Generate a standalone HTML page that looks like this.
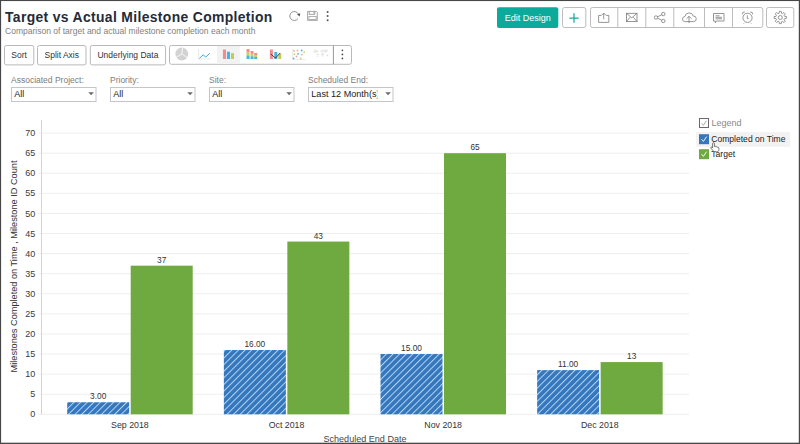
<!DOCTYPE html>
<html><head><meta charset="utf-8"><style>
html,body{margin:0;padding:0;background:#fff;width:800px;height:444px;overflow:hidden}
svg{display:block;font-family:"Liberation Sans", sans-serif}
</style></head><body>
<svg width="800" height="444" viewBox="0 0 800 444">
<defs>
<pattern id="hatch" patternUnits="userSpaceOnUse" width="4.67" height="4.67" patternTransform="rotate(45)">
<rect width="4.67" height="4.67" fill="#3577bd"/>
<rect x="0" y="0" width="1" height="4.67" fill="#b3d3f3"/>
</pattern>
</defs>
<rect width="800" height="444" fill="#fff"/>
<text x="5" y="22.2" font-size="13.9" letter-spacing="0.35" font-weight="bold" fill="#252b38">Target vs Actual Milestone Completion</text>
<text x="5" y="33.6" font-size="8.53" fill="#818181">Comparison of target and actual milestone completion each month</text>
<path d="M298.0,18.6 A4.5,4.5 0 1 1 298.3,13.9" fill="none" stroke="#777" stroke-width="0.8"/>
<path d="M297.0,14.3 L300.3,13.2 L299.6,16.6 Z" fill="#555"/>
<path d="M307.6,11.4 H316.3 L317.3,12.4 V20.4 H307.6 Z" fill="none" stroke="#8a8a8a" stroke-width="0.75"/>
<path d="M309.2,11.4 V14.4 H314.8 V11.4 M313.8,12.2 V13.6" fill="none" stroke="#8a8a8a" stroke-width="0.75"/>
<rect x="308.9" y="16.4" width="7.2" height="3.2" fill="none" stroke="#999" stroke-width="0.75"/>
<circle cx="327.6" cy="12" r="1.0" fill="#555"/>
<circle cx="327.6" cy="16.1" r="1.0" fill="#555"/>
<circle cx="327.6" cy="20.2" r="1.0" fill="#555"/>
<rect x="497" y="7.2" width="61.3" height="20.8" rx="2" fill="#0caa9b"/>
<text x="527.8" y="20.8" font-size="9" fill="#fff" text-anchor="middle">Edit Design</text>
<rect x="562.5" y="7.5" width="23.3" height="20" rx="2" fill="#fff" stroke="#bdbdbd" stroke-width="1"/>
<path d="M569.3,18 H578.7 M574,13.3 V22.7" stroke="#17ab9e" stroke-width="1.25"/>
<rect x="590.5" y="7.5" width="172.3" height="20" rx="2" fill="#fff" stroke="#bdbdbd" stroke-width="1"/>
<line x1="617.8" y1="7.5" x2="617.8" y2="27.5" stroke="#bdbdbd" stroke-width="1"/>
<line x1="645.8" y1="7.5" x2="645.8" y2="27.5" stroke="#bdbdbd" stroke-width="1"/>
<line x1="673.8" y1="7.5" x2="673.8" y2="27.5" stroke="#bdbdbd" stroke-width="1"/>
<line x1="704.5" y1="7.5" x2="704.5" y2="27.5" stroke="#bdbdbd" stroke-width="1"/>
<line x1="732.5" y1="7.5" x2="732.5" y2="27.5" stroke="#bdbdbd" stroke-width="1"/>
<rect x="766.5" y="7.5" width="27.3" height="20" rx="2" fill="#fff" stroke="#bdbdbd" stroke-width="1"/>
<path d="M601.2,15.4 H598.6 V22.4 H608.8 V15.4 H606.3" fill="none" stroke="#7c7c7c" stroke-width="0.8"/>
<path d="M603.7,19.2 V13.1 M601.3,15.5 L603.7,13.1 L606.1,15.5" fill="none" stroke="#7c7c7c" stroke-width="0.8"/>
<rect x="626.5" y="13.3" width="10.5" height="8.3" fill="none" stroke="#7c7c7c" stroke-width="0.8"/>
<path d="M626.5,13.3 L631.75,17.8 L637,13.3 M626.5,21.6 L630.2,17.2 M637,21.6 L633.3,17.2" fill="none" stroke="#7c7c7c" stroke-width="0.8"/>
<path d="M656,17.5 L663.3,14 M656,17.5 L663.3,21" stroke="#7c7c7c" stroke-width="0.8"/>
<circle cx="656" cy="17.5" r="1.7" fill="#fff" stroke="#7c7c7c" stroke-width="0.8"/>
<circle cx="663.3" cy="14" r="1.7" fill="#fff" stroke="#7c7c7c" stroke-width="0.8"/>
<circle cx="663.3" cy="21" r="1.7" fill="#fff" stroke="#7c7c7c" stroke-width="0.8"/>
<path d="M684.4,21.6 A2.6,2.6 0 0 1 684.9,16.5 A4.3,4.3 0 0 1 693.3,16.1 A2.75,2.75 0 0 1 693.7,21.6 Z" fill="none" stroke="#7c7c7c" stroke-width="0.8"/>
<path d="M689,23 V16.3 M686.6,18.7 L689,16.3 L691.4,18.7" fill="none" stroke="#7c7c7c" stroke-width="0.8"/>
<path d="M713.5,13.5 H724 V21 H716.5 L715.3,22.8 V21 H713.5 Z" fill="none" stroke="#7c7c7c" stroke-width="0.8"/>
<path d="M715.5,15.8 H719.5 M715.5,17.3 H722 M715.5,18.8 H722" stroke="#7c7c7c" stroke-width="0.8"/>
<circle cx="747.5" cy="17.8" r="4.6" fill="none" stroke="#7c7c7c" stroke-width="0.8"/>
<path d="M742.3,14.3 A2.2,2.2 0 0 1 744.8,12 M752.7,14.3 A2.2,2.2 0 0 0 750.2,12 M747.3,15.3 V18.6 H748.6 M744.5,22.8 L743.8,23.5 M750.5,22.8 L751.2,23.5" fill="none" stroke="#7c7c7c" stroke-width="0.8"/>
<path d="M779.16,13.25 L779.33,11.38 L781.27,11.38 L781.44,13.25 L782.50,13.69 L783.94,12.48 L785.32,13.86 L784.11,15.30 L784.55,16.36 L786.42,16.53 L786.42,18.47 L784.55,18.64 L784.11,19.70 L785.32,21.14 L783.94,22.52 L782.50,21.31 L781.44,21.75 L781.27,23.62 L779.33,23.62 L779.16,21.75 L778.10,21.31 L776.66,22.52 L775.28,21.14 L776.49,19.70 L776.05,18.64 L774.18,18.47 L774.18,16.53 L776.05,16.36 L776.49,15.30 L775.28,13.86 L776.66,12.48 L778.10,13.69 Z" fill="none" stroke="#7c7c7c" stroke-width="0.8" stroke-linejoin="round"/>
<circle cx="780.3" cy="17.5" r="2.0" fill="none" stroke="#7c7c7c" stroke-width="0.8"/>
<rect x="4.5" y="45.5" width="29.299999999999997" height="19.4" rx="2" fill="#fff" stroke="#b9b9b9" stroke-width="1"/>
<text x="19.15" y="57.6" font-size="8.5" fill="#333" text-anchor="middle">Sort</text>
<rect x="37.5" y="45.5" width="48.5" height="19.4" rx="2" fill="#fff" stroke="#b9b9b9" stroke-width="1"/>
<text x="61.75" y="57.6" font-size="8.5" fill="#333" text-anchor="middle">Split Axis</text>
<rect x="90.3" y="45.5" width="75.3" height="19.4" rx="2" fill="#fff" stroke="#b9b9b9" stroke-width="1"/>
<text x="127.94999999999999" y="57.6" font-size="8.5" fill="#333" text-anchor="middle">Underlying Data</text>
<rect x="169.5" y="45.5" width="182" height="18.8" rx="2" fill="#fff" stroke="#b9b9b9" stroke-width="1"/>
<rect x="217" y="46" width="22.8" height="17.8" fill="#f2f2f2"/>
<line x1="333.4" y1="45.5" x2="333.4" y2="64.3" stroke="#999" stroke-width="1"/>
<circle cx="342.4" cy="50.3" r="0.85" fill="#444"/>
<circle cx="342.4" cy="54.4" r="0.85" fill="#444"/>
<circle cx="342.4" cy="58.4" r="0.85" fill="#444"/>
<circle cx="181.8" cy="54" r="6.4" fill="#d2d2d2"/>
<path d="M181.8,54 L182.6,47.6 M181.8,54 L176.1,57.2 M181.8,54 L187.4,57.6" stroke="#fff" stroke-width="0.8"/>
<path d="M198.7,49 V59 H211" fill="none" stroke="#d8d8d8" stroke-width="0.6"/>
<path d="M199.4,58.4 L203.3,54.7 L205.7,57.2 L209.8,53.2" fill="none" stroke="#3fa9dd" stroke-width="1.0"/>
<rect x="222.9" y="49.5" width="3.1" height="9.5" fill="#f48c8c"/>
<rect x="226.9" y="51.7" width="3.1" height="7.3" fill="#44b4e4"/>
<rect x="230.9" y="53.1" width="3.1" height="5.9" fill="#bfcc55"/>
<rect x="246.5" y="49" width="3" height="3.5333333333333337" fill="#f48c8c"/>
<rect x="246.5" y="52.333333333333336" width="3" height="3.5333333333333337" fill="#c8d060"/>
<rect x="246.5" y="55.666666666666664" width="3" height="3.3333333333333335" fill="#44b4e4"/>
<rect x="250.5" y="51" width="3" height="2.8666666666666667" fill="#f48c8c"/>
<rect x="250.5" y="53.666666666666664" width="3" height="2.8666666666666667" fill="#c8d060"/>
<rect x="250.5" y="56.333333333333336" width="3" height="2.6666666666666665" fill="#44b4e4"/>
<rect x="254.2" y="53" width="3" height="2.2" fill="#f48c8c"/>
<rect x="254.2" y="55.0" width="3" height="2.2" fill="#c8d060"/>
<rect x="254.2" y="57.0" width="3" height="2.0" fill="#44b4e4"/>
<rect x="269.9" y="49.5" width="3" height="9.5" fill="#f48c8c"/>
<rect x="274.3" y="52" width="3" height="7" fill="#44b4e4"/>
<rect x="278.3" y="53.5" width="3" height="5.5" fill="#bfcc55"/>
<path d="M270.7,54 L275.5,58 L280.2,53" fill="none" stroke="#334" stroke-width="0.9"/>
<path d="M292.3,49 V59.6 H305.5" fill="none" stroke="#dcdcdc" stroke-width="0.6"/>
<circle cx="294" cy="50.8" r="0.9" fill="#f4a0a0"/>
<circle cx="297.5" cy="50.5" r="0.9" fill="#c8d070"/>
<circle cx="301.7" cy="50.5" r="0.9" fill="#44b4e4"/>
<circle cx="304.2" cy="52.2" r="0.9" fill="#c8d070"/>
<circle cx="294.5" cy="54.2" r="0.9" fill="#c8d070"/>
<circle cx="298" cy="53.8" r="0.9" fill="#44b4e4"/>
<circle cx="301.8" cy="54.6" r="0.9" fill="#f4a0a0"/>
<circle cx="296.5" cy="56.5" r="0.9" fill="#f4a0a0"/>
<circle cx="293.6" cy="58.4" r="0.9" fill="#44b4e4"/>
<circle cx="300.6" cy="58.4" r="0.9" fill="#c8d070"/>
<g fill="#dedede"><circle cx="316.14" cy="52.68" r="0.45"/><circle cx="314.62" cy="52.41" r="0.45"/><circle cx="315.53" cy="51.21" r="0.45"/><circle cx="318.37" cy="51.62" r="0.45"/><circle cx="315.93" cy="52.27" r="0.45"/><circle cx="317.78" cy="51.47" r="0.45"/><circle cx="316.93" cy="50.55" r="0.45"/><circle cx="315.35" cy="51.02" r="0.45"/><circle cx="314.40" cy="50.38" r="0.45"/><circle cx="313.79" cy="51.30" r="0.45"/><circle cx="315.69" cy="51.14" r="0.45"/><circle cx="316.10" cy="50.27" r="0.45"/><circle cx="315.86" cy="51.77" r="0.45"/><circle cx="317.19" cy="50.68" r="0.45"/><circle cx="315.53" cy="50.03" r="0.45"/><circle cx="315.44" cy="50.00" r="0.45"/><circle cx="314.16" cy="52.38" r="0.45"/><circle cx="313.64" cy="52.03" r="0.45"/><circle cx="316.59" cy="51.16" r="0.45"/><circle cx="316.80" cy="52.06" r="0.45"/><circle cx="317.68" cy="51.27" r="0.45"/><circle cx="315.00" cy="50.87" r="0.45"/><circle cx="314.39" cy="51.45" r="0.45"/><circle cx="317.05" cy="56.61" r="0.45"/><circle cx="316.68" cy="54.64" r="0.45"/><circle cx="317.10" cy="53.92" r="0.45"/><circle cx="318.12" cy="54.09" r="0.45"/><circle cx="317.31" cy="54.86" r="0.45"/><circle cx="318.13" cy="54.14" r="0.45"/><circle cx="318.12" cy="54.73" r="0.45"/><circle cx="317.40" cy="54.69" r="0.45"/><circle cx="317.87" cy="54.31" r="0.45"/><circle cx="317.45" cy="55.94" r="0.45"/><circle cx="318.10" cy="54.08" r="0.45"/><circle cx="318.26" cy="56.35" r="0.45"/><circle cx="321.51" cy="51.25" r="0.45"/><circle cx="321.64" cy="52.01" r="0.45"/><circle cx="322.22" cy="50.82" r="0.45"/><circle cx="321.76" cy="50.83" r="0.45"/><circle cx="321.83" cy="50.32" r="0.45"/><circle cx="323.09" cy="50.19" r="0.45"/><circle cx="320.50" cy="50.96" r="0.45"/><circle cx="321.85" cy="51.31" r="0.45"/><circle cx="321.78" cy="50.88" r="0.45"/><circle cx="322.31" cy="51.72" r="0.45"/><circle cx="321.54" cy="50.70" r="0.45"/><circle cx="323.35" cy="51.29" r="0.45"/><circle cx="322.34" cy="56.30" r="0.45"/><circle cx="323.39" cy="53.76" r="0.45"/><circle cx="321.96" cy="54.86" r="0.45"/><circle cx="322.23" cy="53.29" r="0.45"/><circle cx="321.92" cy="53.93" r="0.45"/><circle cx="323.60" cy="53.98" r="0.45"/><circle cx="321.88" cy="55.21" r="0.45"/><circle cx="322.85" cy="55.59" r="0.45"/><circle cx="323.66" cy="54.30" r="0.45"/><circle cx="322.68" cy="54.44" r="0.45"/><circle cx="322.01" cy="55.27" r="0.45"/><circle cx="323.73" cy="54.70" r="0.45"/><circle cx="322.60" cy="54.14" r="0.45"/><circle cx="322.23" cy="53.52" r="0.45"/><circle cx="322.49" cy="53.43" r="0.45"/><circle cx="325.31" cy="49.84" r="0.45"/><circle cx="326.73" cy="51.05" r="0.45"/><circle cx="324.68" cy="49.77" r="0.45"/><circle cx="325.99" cy="51.95" r="0.45"/><circle cx="324.58" cy="50.56" r="0.45"/><circle cx="324.90" cy="51.59" r="0.45"/><circle cx="324.42" cy="51.79" r="0.45"/><circle cx="325.43" cy="51.82" r="0.45"/><circle cx="326.07" cy="50.77" r="0.45"/><circle cx="323.67" cy="50.49" r="0.45"/><circle cx="325.48" cy="51.61" r="0.45"/><circle cx="326.49" cy="50.35" r="0.45"/><circle cx="326.76" cy="51.85" r="0.45"/><circle cx="325.69" cy="50.58" r="0.45"/><circle cx="325.24" cy="51.73" r="0.45"/><circle cx="327.00" cy="50.20" r="0.45"/><circle cx="326.76" cy="50.55" r="0.45"/><circle cx="324.75" cy="51.97" r="0.45"/><circle cx="327.51" cy="50.38" r="0.45"/><circle cx="326.16" cy="51.48" r="0.45"/><circle cx="324.71" cy="50.89" r="0.45"/><circle cx="326.96" cy="49.80" r="0.45"/><circle cx="326.64" cy="51.68" r="0.45"/><circle cx="327.81" cy="54.82" r="0.45"/><circle cx="327.72" cy="55.00" r="0.45"/><circle cx="327.91" cy="55.85" r="0.45"/><circle cx="327.66" cy="55.05" r="0.45"/><circle cx="327.10" cy="55.98" r="0.45"/><circle cx="326.88" cy="55.78" r="0.45"/><circle cx="327.88" cy="55.33" r="0.45"/></g>
<text x="11" y="82.9" font-size="8.5" fill="#7d7d7d">Associated Project:</text>
<rect x="11.5" y="87.5" width="84.5" height="14" fill="#fff" stroke="#c4c4cc" stroke-width="1"/>
<text x="14.3" y="97.2" font-size="9" fill="#222">All</text>
<path d="M88.3,92.3 H93.89999999999999 L91.1,95.2 Z" fill="#6a6a6a"/>
<text x="110" y="82.9" font-size="8.5" fill="#7d7d7d">Priority:</text>
<rect x="110.5" y="87.5" width="84.5" height="14" fill="#fff" stroke="#c4c4cc" stroke-width="1"/>
<text x="113.3" y="97.2" font-size="9" fill="#222">All</text>
<path d="M187.3,92.3 H192.9 L190.10000000000002,95.2 Z" fill="#6a6a6a"/>
<text x="209" y="82.9" font-size="8.5" fill="#7d7d7d">Site:</text>
<rect x="209.5" y="87.5" width="84.5" height="14" fill="#fff" stroke="#c4c4cc" stroke-width="1"/>
<text x="212.3" y="97.2" font-size="9" fill="#222">All</text>
<path d="M286.3,92.3 H291.90000000000003 L289.1,95.2 Z" fill="#6a6a6a"/>
<text x="308" y="82.9" font-size="8.5" fill="#7d7d7d">Scheduled End:</text>
<rect x="308.5" y="87.5" width="84.5" height="14" fill="#fff" stroke="#c4c4cc" stroke-width="1"/>
<svg x="308" y="87" width="69.5" height="15" overflow="hidden"><text x="3.3" y="10.2" font-size="9.1" fill="#222">Last 12 Month(s)</text></svg>
<path d="M385.3,92.3 H390.90000000000003 L388.1,95.2 Z" fill="#6a6a6a"/>
<g>
<line x1="38.5" y1="414.30" x2="689" y2="414.30" stroke="#eeeeee" stroke-width="1"/>
<text x="35.3" y="417.40" font-size="9" fill="#3a3a3a" text-anchor="end">0</text>
<line x1="38.5" y1="394.21" x2="689" y2="394.21" stroke="#eeeeee" stroke-width="1"/>
<text x="35.3" y="397.31" font-size="9" fill="#3a3a3a" text-anchor="end">5</text>
<line x1="38.5" y1="374.13" x2="689" y2="374.13" stroke="#eeeeee" stroke-width="1"/>
<text x="35.3" y="377.23" font-size="9" fill="#3a3a3a" text-anchor="end">10</text>
<line x1="38.5" y1="354.04" x2="689" y2="354.04" stroke="#eeeeee" stroke-width="1"/>
<text x="35.3" y="357.14" font-size="9" fill="#3a3a3a" text-anchor="end">15</text>
<line x1="38.5" y1="333.96" x2="689" y2="333.96" stroke="#eeeeee" stroke-width="1"/>
<text x="35.3" y="337.06" font-size="9" fill="#3a3a3a" text-anchor="end">20</text>
<line x1="38.5" y1="313.87" x2="689" y2="313.87" stroke="#eeeeee" stroke-width="1"/>
<text x="35.3" y="316.97" font-size="9" fill="#3a3a3a" text-anchor="end">25</text>
<line x1="38.5" y1="293.79" x2="689" y2="293.79" stroke="#eeeeee" stroke-width="1"/>
<text x="35.3" y="296.89" font-size="9" fill="#3a3a3a" text-anchor="end">30</text>
<line x1="38.5" y1="273.70" x2="689" y2="273.70" stroke="#eeeeee" stroke-width="1"/>
<text x="35.3" y="276.80" font-size="9" fill="#3a3a3a" text-anchor="end">35</text>
<line x1="38.5" y1="253.61" x2="689" y2="253.61" stroke="#eeeeee" stroke-width="1"/>
<text x="35.3" y="256.71" font-size="9" fill="#3a3a3a" text-anchor="end">40</text>
<line x1="38.5" y1="233.53" x2="689" y2="233.53" stroke="#eeeeee" stroke-width="1"/>
<text x="35.3" y="236.63" font-size="9" fill="#3a3a3a" text-anchor="end">45</text>
<line x1="38.5" y1="213.44" x2="689" y2="213.44" stroke="#eeeeee" stroke-width="1"/>
<text x="35.3" y="216.54" font-size="9" fill="#3a3a3a" text-anchor="end">50</text>
<line x1="38.5" y1="193.36" x2="689" y2="193.36" stroke="#eeeeee" stroke-width="1"/>
<text x="35.3" y="196.46" font-size="9" fill="#3a3a3a" text-anchor="end">55</text>
<line x1="38.5" y1="173.27" x2="689" y2="173.27" stroke="#eeeeee" stroke-width="1"/>
<text x="35.3" y="176.37" font-size="9" fill="#3a3a3a" text-anchor="end">60</text>
<line x1="38.5" y1="153.19" x2="689" y2="153.19" stroke="#eeeeee" stroke-width="1"/>
<text x="35.3" y="156.29" font-size="9" fill="#3a3a3a" text-anchor="end">65</text>
<line x1="38.5" y1="133.10" x2="689" y2="133.10" stroke="#eeeeee" stroke-width="1"/>
<text x="35.3" y="136.20" font-size="9" fill="#3a3a3a" text-anchor="end">70</text>
</g>
<line x1="41.5" y1="120" x2="41.5" y2="414.5" stroke="#d4d4d4" stroke-width="1"/>
<rect x="67.20" y="402.25" width="62" height="12.05" fill="url(#hatch)"/>
<rect x="130.70" y="265.67" width="62" height="148.63" fill="#6eaa3f"/>
<text x="98.20" y="399.25" font-size="8.3" fill="#333" text-anchor="middle">3.00</text>
<text x="161.70" y="262.67" font-size="8.3" fill="#333" text-anchor="middle">37</text>
<text x="129.90" y="427.5" font-size="8.8" fill="#333" text-anchor="middle">Sep 2018</text>
<rect x="223.85" y="350.03" width="62" height="64.27" fill="url(#hatch)"/>
<rect x="287.35" y="241.56" width="62" height="172.74" fill="#6eaa3f"/>
<text x="254.85" y="347.03" font-size="8.3" fill="#333" text-anchor="middle">16.00</text>
<text x="318.35" y="238.56" font-size="8.3" fill="#333" text-anchor="middle">43</text>
<text x="286.55" y="427.5" font-size="8.8" fill="#333" text-anchor="middle">Oct 2018</text>
<rect x="380.50" y="354.04" width="62" height="60.26" fill="url(#hatch)"/>
<rect x="444.00" y="153.19" width="62" height="261.11" fill="#6eaa3f"/>
<text x="411.50" y="351.04" font-size="8.3" fill="#333" text-anchor="middle">15.00</text>
<text x="475.00" y="150.19" font-size="8.3" fill="#333" text-anchor="middle">65</text>
<text x="443.20" y="427.5" font-size="8.8" fill="#333" text-anchor="middle">Nov 2018</text>
<rect x="537.15" y="370.11" width="62" height="44.19" fill="url(#hatch)"/>
<rect x="600.65" y="362.08" width="62" height="52.22" fill="#6eaa3f"/>
<text x="568.15" y="367.11" font-size="8.3" fill="#333" text-anchor="middle">11.00</text>
<text x="631.65" y="359.08" font-size="8.3" fill="#333" text-anchor="middle">13</text>
<text x="599.85" y="427.5" font-size="8.8" fill="#333" text-anchor="middle">Dec 2018</text>
<text x="365" y="441.8" font-size="9.05" fill="#444" text-anchor="middle">Scheduled End Date</text>
<text transform="translate(16.9,266.5) rotate(-90)" font-size="9.2" fill="#333" text-anchor="middle">Milestones Completed on Time , Milestone ID Count</text>
<rect x="699.5" y="118.5" width="9" height="9" fill="#fff" stroke="#6a6a6a" stroke-width="1"/>
<path d="M701.8,123.3 L703.4,125.3 L706.3,120.8" fill="none" stroke="#888" stroke-width="0.7"/>
<text x="711.4" y="125.8" font-size="9" fill="#8a8a8a">Legend</text>
<rect x="696.2" y="132.1" width="93.8" height="14.7" fill="#f2f2f2"/>
<rect x="699" y="134.2" width="10" height="10" fill="#3577bd"/>
<path d="M701.6,139.2 L703.4,141.4 L706.6,136.6" fill="none" stroke="#fff" stroke-width="0.9"/>
<text x="711.3" y="142.2" font-size="8.55" fill="#222">Completed on Time</text>
<rect x="699" y="149.2" width="10" height="10" fill="#6eaa3f"/>
<path d="M701.6,154.2 L703.4,156.4 L706.6,151.6" fill="none" stroke="#fff" stroke-width="0.9"/>
<text x="711.3" y="157" font-size="8.55" fill="#222">Target</text>
<path d="M712.6,143.4 C712.6,142.5 714.4,142.5 714.4,143.4 V146.6 C714.8,146.1 716,146.2 716.1,146.9 C716.5,146.5 717.6,146.7 717.7,147.4 C718.1,147.2 718.9,147.5 718.9,148.2 V149.6 C718.9,150.9 718,151.8 716.8,151.8 H714.8 C713.9,151.8 713.4,151.2 712.8,150.4 L710.9,148.1 C710.4,147.4 711.2,146.6 711.9,147.2 L712.6,147.9 Z" fill="#fff" stroke="#333" stroke-width="0.65" stroke-linejoin="round"/>
<rect x="0" y="0" width="800" height="1.05" fill="#474747"/>
<rect x="0" y="0" width="1.1" height="444" fill="#474747"/>
<rect x="798.8" y="0" width="1.2" height="444" fill="#474747"/>
<rect x="0" y="442.7" width="800" height="1.3" fill="#474747"/>
</svg>
</body></html>
